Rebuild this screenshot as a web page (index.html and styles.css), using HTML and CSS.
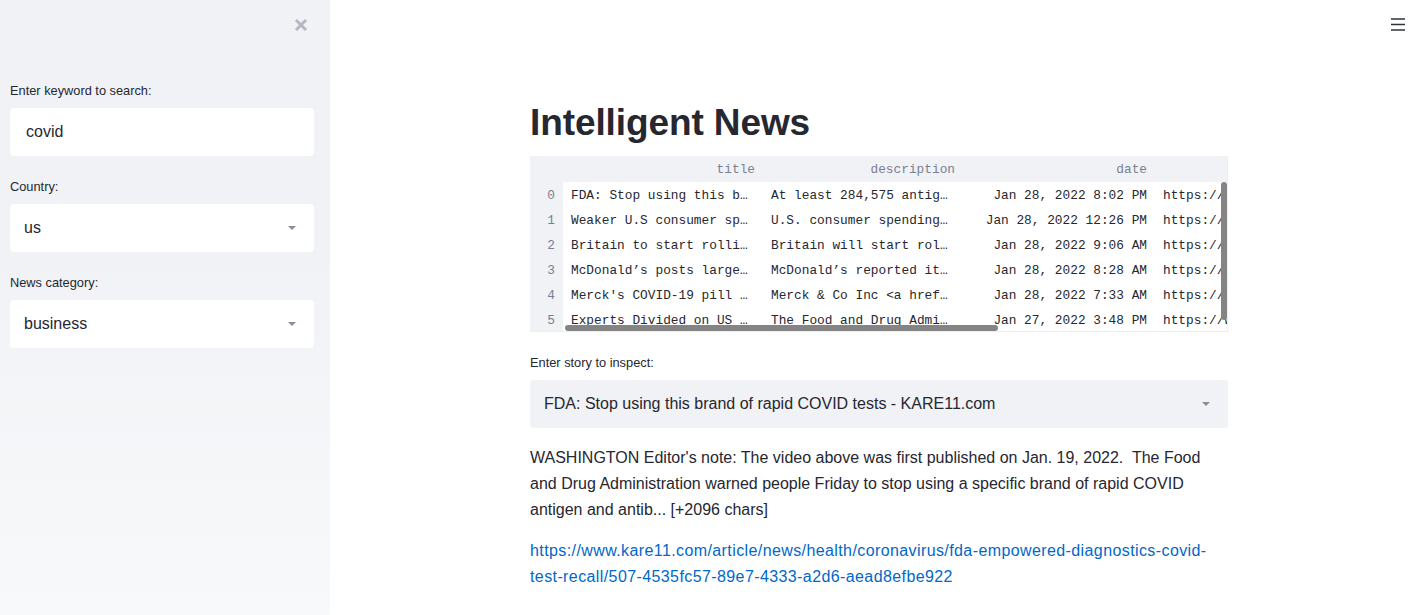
FILE: index.html
```html
<!DOCTYPE html>
<html>
<head>
<meta charset="utf-8">
<link rel="stylesheet" href="styles.css">
</head>
<body>
<div class="app">
  <aside class="sidebar">
    <div class="sidebar-top">
      <svg class="close-icon" width="14" height="14" viewBox="0 0 14 14"><path d="M2 2 L12 12 M12 2 L2 12" stroke="#b5b8c0" stroke-width="3" stroke-linecap="butt"/></svg>
    </div>
    <div class="widgets">
      <div class="widget">
        <div class="label">Enter keyword to search:</div>
        <div class="input">covid</div>
      </div>
      <div class="widget">
        <div class="label">Country:</div>
        <div class="select sidebar-select"><span>us</span><span class="caret"></span></div>
      </div>
      <div class="widget">
        <div class="label">News category:</div>
        <div class="select sidebar-select"><span>business</span><span class="caret"></span></div>
      </div>
    </div>
  </aside>
  <main class="main">
    <div class="topbar">
      <svg class="menu-icon" width="16" height="14" viewBox="0 0 16 14"><path d="M1 2 H15 M1 7.5 H15 M1 13 H15" stroke="#31333f" stroke-width="1.6"/></svg>
    </div>
    <div class="content">
      <h1 class="title">Intelligent News</h1>
      <div class="table-wrap">
        <table class="df">
          <colgroup>
            <col class="c-idx"><col class="c-title"><col class="c-desc"><col class="c-date"><col class="c-url">
          </colgroup>
          <thead>
            <tr><th class="idx"></th><th>title</th><th>description</th><th>date</th><th>url</th></tr>
          </thead>
          <tbody>
            <tr><td class="idx">0</td><td>FDA: Stop using this b…</td><td>At least 284,575 antig…</td><td class="r">Jan 28, 2022 8:02 PM</td><td>https://www.kare11.com</td></tr>
            <tr><td class="idx">1</td><td>Weaker U.S consumer sp…</td><td>U.S. consumer spending…</td><td class="r">Jan 28, 2022 12:26 PM</td><td>https://www.reuters.com</td></tr>
            <tr><td class="idx">2</td><td>Britain to start rolli…</td><td>Britain will start rol…</td><td class="r">Jan 28, 2022 9:06 AM</td><td>https://www.reuters.com</td></tr>
            <tr><td class="idx">3</td><td>McDonald’s posts large…</td><td>McDonald’s reported it…</td><td class="r">Jan 28, 2022 8:28 AM</td><td>https://www.cnbc.com</td></tr>
            <tr><td class="idx">4</td><td>Merck's COVID-19 pill …</td><td>Merck &amp; Co Inc &lt;a href…</td><td class="r">Jan 28, 2022 7:33 AM</td><td>https://www.reuters.com</td></tr>
            <tr><td class="idx">5</td><td>Experts Divided on US …</td><td>The Food and Drug Admi…</td><td class="r">Jan 27, 2022 3:48 PM</td><td>https://www.nytimes.com</td></tr>
          </tbody>
        </table>
        <div class="vscroll"></div>
        <div class="hscroll"></div>
      </div>
      <div class="label main-label">Enter story to inspect:</div>
      <div class="select main-select"><span>FDA: Stop using this brand of rapid COVID tests - KARE11.com</span><span class="caret"></span></div>
      <p class="story">WASHINGTON Editor's note: The video above was first published on Jan. 19, 2022.&nbsp; The Food and Drug Administration warned people Friday to stop using a specific brand of rapid COVID antigen and antib... [+2096 chars]</p>
      <p class="story"><a class="link" href="#">https://www.kare11.com/article/news/health/coronavirus/fda-empowered-diagnostics-covid-test-recall/507-4535fc57-89e7-4333-a2d6-aead8efbe922</a></p>
    </div>
  </main>
</div>
</body>
</html>
```

FILE: styles.css
```css
* { box-sizing: border-box; }
html, body {
  margin: 0;
  padding: 0;
  height: 100%;
}
body {
  font-family: "Liberation Sans", Arial, sans-serif;
  color: #262730;
  background: #ffffff;
  overflow: hidden;
}
.app {
  display: flex;
  height: 615px;
}
.sidebar {
  width: 330px;
  flex: 0 0 330px;
  background: linear-gradient(180deg, #f0f2f6 0%, #f0f2f6 40%, #f8f9fa 100%);
  padding: 0 16px 0 10px;
}
.sidebar-top {
  height: 81px;
  display: flex;
  justify-content: flex-end;
  padding-top: 18px;
}
.close-icon {
  margin-right: 6px;
}
.widgets {
  display: flex;
  flex-direction: column;
  gap: 21px;
}
.label {
  font-size: 12.8px;
  line-height: 20px;
  height: 20px;
  color: #262730;
  margin-bottom: 7px;
}
.input, .select {
  height: 48px;
  border-radius: 4px;
  background: #ffffff;
  font-size: 16px;
  display: flex;
  align-items: center;
}
.input { padding-left: 16px; }
.select {
  padding: 0 14px;
  justify-content: space-between;
}
.caret {
  width: 0;
  height: 0;
  border-left: 4px solid transparent;
  border-right: 4px solid transparent;
  border-top: 4px solid #8a8d9c;
  margin-right: 4px;
}
.main {
  flex: 1;
  position: relative;
  padding-left: 200px;
}
.topbar {
  position: absolute;
  top: 17px;
  right: 17px;
}
.content {
  width: 698px;
  padding-top: 98px;
}
.title {
  margin: 0 0 8px 0;
  font-size: 37px;
  line-height: 50px;
  font-weight: 700;
  color: #262730;
  letter-spacing: -0.1px;
}
.table-wrap {
  position: relative;
  width: 698px;
  height: 176px;
  overflow: hidden;
  border-right: 1px solid #eceef3;
  border-bottom: 1px solid #eceef3;
}
.df {
  border-collapse: collapse;
  table-layout: fixed;
  width: 825px;
  font-family: "Liberation Mono", "DejaVu Sans Mono", monospace;
  font-size: 12.8px;
}
.c-idx { width: 33px; }
.c-title { width: 200px; }
.c-desc { width: 200px; }
.c-date { width: 192px; }
.c-url { width: 200px; }
.df th {
  background: #f0f2f6;
  color: #7a7f92;
  font-weight: 400;
  text-align: right;
  height: 26px;
  padding: 1px 8px 0 8px;
  white-space: nowrap;
  overflow: hidden;
}
.df td {
  height: 25px;
  padding: 1px 8px 0 8px;
  white-space: nowrap;
  overflow: hidden;
  color: #262730;
}
.df td.idx {
  background: #f0f2f6;
  color: #7a7f92;
  text-align: right;
}
.df td.r { text-align: right; }
.vscroll {
  position: absolute;
  left: 691px;
  top: 26px;
  width: 6px;
  height: 138px;
  border-radius: 3px;
  background: #848484;
}
.hscroll {
  position: absolute;
  left: 35px;
  top: 169px;
  width: 433px;
  height: 6px;
  border-radius: 3px;
  background: #848484;
}
.main-label {
  margin-top: 21px;
  margin-bottom: 7px;
}
.main-select {
  background: #f0f2f6;
}
.story {
  font-size: 16px;
  line-height: 26px;
  margin: 17px 0 0 0;
}
.story + .story { margin-top: 15px; }
.link {
  color: #0068c9;
  text-decoration: none;
  letter-spacing: 0.4px;
}
```
